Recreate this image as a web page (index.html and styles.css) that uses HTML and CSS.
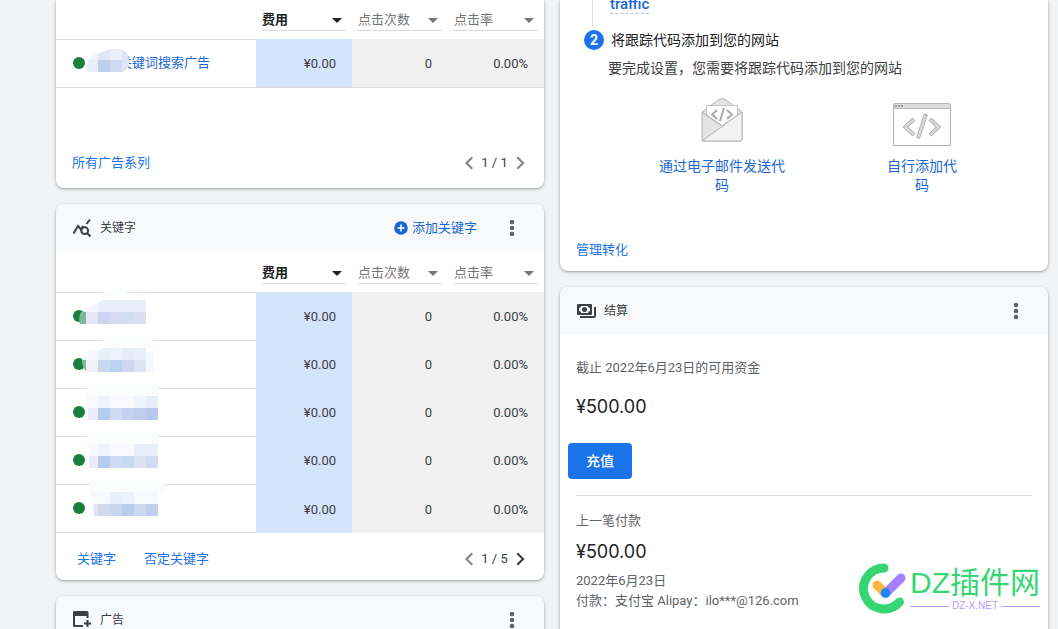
FILE: index.html
```html
<!DOCTYPE html>
<html lang="zh-CN">
<head>
<meta charset="utf-8">
<title>概览</title>
<link rel="stylesheet" href="styles.css">
</head>
<body>
<main class="board">
  <div class="column">
    <section class="card card-cut">
      <table class="stats stats-lined">
        <colgroup><col class="col-name"><col class="col-metric"><col class="col-metric"><col class="col-metric"></colgroup>
        <thead>
          <tr>
            <td></td>
            <th><span class="picker picker-active"><select aria-label="指标一"><option>费用</option></select></span></th>
            <th><span class="picker"><select aria-label="指标二"><option>点击次数</option></select></span></th>
            <th><span class="picker"><select aria-label="指标三"><option>点击率</option></select></span></th>
          </tr>
        </thead>
        <tbody>
          <tr>
            <td class="name"><span class="name-line"><i class="dot"></i><a class="campaign" href="#">关键词搜索广告</a></span>
              <svg class="mask" width="112" height="48" viewBox="0 0 112 48"><clipPath id="blob"><path d="M31 33q-2-13 9-18 14-6 24-5 8 2 9 12 1 7-6 11z"/></clipPath><g clip-path="url(#blob)"><path fill="#f0f3fb" d="M28 6h14v28H28z"/><path fill="#e1e7f6" d="M42 6h12v15H42z"/><path fill="#ebeff9" d="M54 6h20v15H54z"/><path fill="#bfcfee" d="M42 21h12v13H42z"/><path fill="#cfdaf1" d="M54 21h12v13H54z"/><path fill="#dde4f5" d="M66 9h9v25h-9z"/><path fill="#e8edf8" d="M28 21h14v13H28z"/></g></svg></td>
            <td class="cost">¥0.00</td><td class="num">0</td><td class="num">0.00%</td>
          </tr>
        </tbody>
      </table>
      <footer class="card-foot foot-tall">
        <a class="foot-link" href="#">所有广告系列</a>
        <div class="pager">
          <button type="button" aria-label="上一页"><svg width="24" height="24" viewBox="0 0 24 24"><path d="m16 7-1.500-1.500L8 12l6.500 6.500L16 17l-5-5z"/></svg></button>
          <span>1 / 1</span>
          <button type="button" aria-label="下一页"><svg width="24" height="24" viewBox="0 0 24 24"><path d="m8.500 7 1.500-1.500 6.500 6.500-6.500 6.500L8.500 17l5-5z"/></svg></button>
        </div>
      </footer>
    </section>

    <section class="card">
      <header class="card-head">
        <svg class="head-icon" width="20" height="20" viewBox="0 0 20 20" fill="none" stroke="#3c4043" stroke-width="2"><path d="M1.500 15.500 6 8l3 3.500 2-3.500M14.500 6 18 1.500" /><circle cx="12.700" cy="12.700" r="3.400"/><path d="m15 15 3.500 3.500"/></svg>
        <h2>关键字</h2>
        <button type="button" class="add"><svg width="14" height="14" viewBox="0 0 14 14"><circle cx="7" cy="7" r="6.800" fill="#1967d2"/><path d="M7 3.500v7M3.500 7h7" stroke="#fff" stroke-width="1.500"/></svg>添加关键字</button>
        <button type="button" class="more" aria-label="更多"><svg width="24" height="24" viewBox="0 0 24 24"><circle cx="12" cy="6" r="2.300"/><circle cx="12" cy="12" r="2.300"/><circle cx="12" cy="18" r="2.300"/></svg></button>
      </header>
      <table class="stats">
        <colgroup><col class="col-name"><col class="col-metric"><col class="col-metric"><col class="col-metric"></colgroup>
        <thead>
          <tr>
            <td></td>
            <th><span class="picker picker-active"><select aria-label="指标一"><option>费用</option></select></span></th>
            <th><span class="picker"><select aria-label="指标二"><option>点击次数</option></select></span></th>
            <th><span class="picker"><select aria-label="指标三"><option>点击率</option></select></span></th>
          </tr>
        </thead>
        <tbody>
          <tr>
            <td class="name"><span class="name-line"><i class="dot"></i></span>
              <svg class="mask" width="112" height="48" viewBox="0 0 112 48"><path fill="#fbfcfc" d="M47 8V2q2-6 11-6 9 0 13 5 15-2 19 4v5z"/><path fill="#f5f7fd" d="M27 20q6-9 20-9v9z"/><path fill="#e9effa" d="M42 11l5-3h43v12H42z"/><path fill="#7fb896" d="M23 20h7v12h-6q-2-6 1-12z"/><path fill="#e3e7f5" d="M30 20h12v12H30z"/><path fill="#cdd4f0" d="M42 20h12v12H42z"/><path fill="#d4daf1" d="M54 20h12v12H54z"/><path fill="#d2dff3" d="M66 20h12v12H66z"/><path fill="#d8e0f2" d="M78 20h12v12H78z"/></svg></td>
            <td class="cost">¥0.00</td><td class="num">0</td><td class="num">0.00%</td>
          </tr>
          <tr>
            <td class="name"><span class="name-line"><i class="dot"></i></span>
              <svg class="mask" width="112" height="48" viewBox="0 0 112 48"><path fill="#fbfcfc" d="M47-4h50v12H47z"/><path fill="#f5f8fc" d="M26 20q2-10 13-11l8 2v9zM90 12h8v20h-8z"/><path fill="#e8f0fa" d="M47 8h7v12H42v-9z"/><path fill="#eef2fc" d="M54 8h12v12H54z"/><path fill="#e8ecf9" d="M66 8h12v12H66z"/><path fill="#e9f0fb" d="M78 8h12v12H78z"/><path fill="#7fb896" d="M26 20h4v11q-4-4-4-11z"/><path fill="#f0f1f9" d="M30 20h12v12H30z"/><path fill="#c8d8f1" d="M42 20h12v12H42z"/><path fill="#bcd2f1" d="M54 20h12v12H54z"/><path fill="#cfd7f0" d="M66 20h12v12H66z"/><path fill="#dee4f4" d="M78 20h12v12H78z"/></svg></td>
            <td class="cost">¥0.00</td><td class="num">0</td><td class="num">0.00%</td>
          </tr>
          <tr>
            <td class="name"><span class="name-line"><i class="dot"></i></span>
              <svg class="mask" width="112" height="48" viewBox="0 0 112 48"><path fill="#fbfcfc" d="M31-4h72V8H31z"/><path fill="#f8f8fd" d="M31 8h71v12H31z"/><path fill="#eff4fc" d="M42 8h12v12H42zM78 8h12v12H78z"/><path fill="#e7eefa" d="M90 8h12v12H90z"/><path fill="#ecebf7" d="M32 20h10v12H32z"/><path fill="#b4ccef" d="M42 20h12v12H42z"/><path fill="#cfdbf2" d="M54 20h12v12H54z"/><path fill="#c3d3ef" d="M66 20h12v12H66z"/><path fill="#bfccec" d="M78 20h12v12H78z"/><path fill="#b7c8ed" d="M90 20h12v12H90z"/></svg></td>
            <td class="cost">¥0.00</td><td class="num">0</td><td class="num">0.00%</td>
          </tr>
          <tr>
            <td class="name"><span class="name-line"><i class="dot"></i></span>
              <svg class="mask" width="112" height="48" viewBox="0 0 112 48"><path fill="#fbfcfc" d="M31-4h72V8H31z"/><path fill="#f8f8fd" d="M32 8h70v12H33z"/><path fill="#f0f4fc" d="M42 8h12v12H42z"/><path fill="#e8effa" d="M78 8h24v12H78z"/><path fill="#ecebf7" d="M33 20h9v12h-9z"/><path fill="#b5ccef" d="M42 20h12v12H42z"/><path fill="#cfdbf2" d="M54 20h12v12H54z"/><path fill="#c7daf2" d="M66 20h12v12H66z"/><path fill="#dae2f4" d="M78 20h12v12H78z"/><path fill="#cfdcf3" d="M90 20h12v12H90z"/></svg></td>
            <td class="cost">¥0.00</td><td class="num">0</td><td class="num">0.00%</td>
          </tr>
          <tr>
            <td class="name"><span class="name-line"><i class="dot"></i></span>
              <svg class="mask" width="112" height="48" viewBox="0 0 112 48"><path fill="#fbfcfc" d="M33-4h75V8H33z"/><path fill="#f7f9fd" d="M34 8h68v12H37z"/><path fill="#e8f0fb" d="M54 8h12v12H54z"/><path fill="#eef2fb" d="M66 8h12v12H66z"/><path fill="#dfe3f3" d="M37 20h5v12h-4z"/><path fill="#d2d9ef" d="M42 20h12v12H42z"/><path fill="#c9d8f0" d="M54 20h12v12H54z"/><path fill="#bacfef" d="M66 20h12v12H66z"/><path fill="#cad8f1" d="M78 20h12v12H78z"/><path fill="#c0d1f0" d="M90 20h12v12H90z"/></svg></td>
            <td class="cost">¥0.00</td><td class="num">0</td><td class="num">0.00%</td>
          </tr>
        </tbody>
      </table>
      <footer class="card-foot">
        <nav class="foot-nav"><a class="foot-link" href="#">关键字</a><a class="foot-link" href="#">否定关键字</a></nav>
        <div class="pager">
          <button type="button" aria-label="上一页"><svg width="24" height="24" viewBox="0 0 24 24"><path d="m16 7-1.500-1.500L8 12l6.500 6.500L16 17l-5-5z"/></svg></button>
          <span>1 / 5</span>
          <button type="button" class="on" aria-label="下一页"><svg width="24" height="24" viewBox="0 0 24 24"><path d="m8.500 7 1.500-1.500 6.500 6.500-6.500 6.500L8.500 17l5-5z"/></svg></button>
        </div>
      </footer>
    </section>

    <section class="card">
      <header class="card-head">
        <svg class="head-icon" width="20" height="20" viewBox="0 0 20 20"><path fill="#3c4043" d="M2 1h13q1.500 0 1.500 1.500V8h-2V6H3v9h8v2H2.500Q1 17 1 15.500v-13Q1 1 2 1zM14.500 10h2v2.500H19v2h-2.500V17h-2v-2.500H12v-2h2.500z"/></svg>
        <h2>广告</h2>
        <button type="button" class="more" aria-label="更多"><svg width="24" height="24" viewBox="0 0 24 24"><circle cx="12" cy="6" r="2.300"/><circle cx="12" cy="12" r="2.300"/><circle cx="12" cy="18" r="2.300"/></svg></button>
      </header>
    </section>
  </div>

  <div class="column">
    <section class="card card-cut">
      <div class="step-prev"><a href="#">traffic</a></div>
      <div class="step"><span class="badge">2</span><h3>将跟踪代码添加到您的网站</h3></div>
      <p class="step-text">要完成设置<span class="punct">，</span>您需要将跟踪代码添加到您的网站</p>
      <div class="choices">
        <button type="button" class="choice">
          <svg width="44" height="48" viewBox="0 0 44 48" fill="#e3e3e3" stroke="#b3b3b3" stroke-linejoin="round"><path d="M2 14 18 2q4-3 8 0l16 12v27q0 2-2 2H3q-1 0-1-2z"/><path fill="#fff" stroke="#c2c2c2" d="M6.500 7.500h31V18L22 28 6.500 18z"/><path fill="#f2f2f2" d="m2 43 40-29v27q0 2-2 2z"/><path fill="#fff" stroke="#c2c2c2" d="M6.500 17V7.500h31V17L22 27.500z"/><path fill="none" d="m2 14 20 14"/><path fill="none" stroke="#aaa" stroke-width="2" stroke-linejoin="miter" d="m17 12-5 4.500 5 4.500M27 12l5 4.500-5 4.500M24 10l-4 13"/></svg>
          <span>通过电子邮件发送代<br>码</span>
        </button>
        <button type="button" class="choice">
          <svg width="58" height="48" viewBox="0 0 58 48" fill="none" stroke="#b3b3b3"><path fill="#fff" d="M.500 47.500v-40q0-2 2-2h53q2 0 2 2v40z"/><path fill="#dcdcdc" d="M.500 10.500v-3q0-2 2-2h53q2 0 2 2v3z"/><path stroke="#999" stroke-width="2" stroke-dasharray="2 1" d="M2 8h9"/><g stroke="#aaa" stroke-width="4"><path d="m21 21-8.500 8L21 37M37 21l8.500 8L37 37M33 16l-8 24"/></g><g stroke="#d8d8d8" stroke-width="2.500"><path d="m20.500 21.500-8 7.500 8 7.500M37.500 21.500l8 7.500-8 7.500M32.700 17l-7.400 22"/></g></svg>
          <span>自行添加代<br>码</span>
        </button>
      </div>
      <a class="foot-link manage" href="#">管理转化</a>
    </section>

    <section class="card">
      <header class="card-head">
        <svg class="head-icon" width="20" height="20" viewBox="0 0 20 20"><path fill="#3c4043" fill-rule="evenodd" d="M2 3h13q1 0 1 1v9q0 1-1 1H2q-1 0-1-1V4q0-1 1-1zM5 5q0 2-2 2v3q2 0 2 2h7q0-2 2-2V7q-2 0-2-2zM18 6h2v9q0 2-2 2H4v-2h14z"/><circle cx="8.500" cy="8.500" r="2.500" fill="#3c4043"/></svg>
        <h2>结算</h2>
        <button type="button" class="more" aria-label="更多"><svg width="24" height="24" viewBox="0 0 24 24"><circle cx="12" cy="6" r="2.300"/><circle cx="12" cy="12" r="2.300"/><circle cx="12" cy="18" r="2.300"/></svg></button>
      </header>
      <div class="billing">
        <p>截止 2022年6月23日的可用资金</p>
        <p class="amount funds">¥500.00</p>
        <button type="button" class="topup">充值</button>
        <div class="last">
          <p>上一笔付款</p>
          <p class="amount">¥500.00</p>
          <p>2022年6月23日</p>
          <p>付款<span class="punct">：</span>支付宝 Alipay<span class="punct">：</span>ilo***@126.com</p>
        </div>
      </div>
    </section>
  </div>

  <div class="watermark">
    <svg width="50" height="52" viewBox="0 0 50 52" fill="none" stroke-linecap="round"><path stroke="#35d673" stroke-width="9" d="M26 5A20.500 20.500 0 1 0 41.500 39"/><path stroke="#ffb63d" stroke-width="9" d="m19 22 8 8"/><path stroke="#a57fff" stroke-width="9" d="M43 15 28 30"/><circle cx="27.500" cy="30" r="4.800" fill="#1b86ff"/></svg>
    <div class="wm-text"><strong>DZ插件网</strong><small>DZ-X.NET</small></div>
  </div>
</main>
</body>
</html>
```

FILE: styles.css
```css
* { box-sizing: border-box; }
body {
  margin: 0;
  background: #f1f3f4;
  color: #3c4043;
  font: 13px/20px Roboto, "Noto Sans CJK SC", sans-serif;
}
h2, h3, p { margin: 0; font-weight: 400; }
a { color: #1967d2; text-decoration: none; }
button { border: 0; padding: 0; background: none; font: inherit; cursor: pointer; }
svg { display: block; flex: none; }
.punct { font-family: "Noto Sans CJK TC", sans-serif; line-height: 1; }

.board {
  position: relative;
  display: grid;
  grid-template-columns: 1fr 1fr;
  gap: 16px;
  height: 100vh;
  padding: 0 10px 0 56px;
  overflow: hidden;
}
.column { display: flex; flex-direction: column; gap: 16px; min-width: 0; }
.card {
  flex: none;
  background: #fff;
  border-radius: 8px;
  box-shadow: 0 1px 2px rgba(60, 64, 67, .3), 0 1px 3px 1px rgba(60, 64, 67, .15);
}
.card-cut { border-radius: 0 0 8px 8px; }

.card-head {
  display: flex;
  align-items: center;
  height: 48px;
  padding: 0 20px 0 16px;
  background: #f8f9fb;
  border-radius: 8px 8px 0 0;
}
.card-head h2 { margin: 0 auto 0 8px; font-size: 12px; }
.add { display: flex; align-items: center; gap: 4px; color: #1967d2; }
.more { margin-left: 23px; fill: #5f6368; }

.stats { width: 100%; table-layout: fixed; border-spacing: 0; }
.col-metric { width: 96px; }
.stats td, .stats th { padding: 0; }
.stats thead td { height: 40px; }
.stats-lined thead td { height: 39px; }
.stats th { padding: 0 6px 8px; vertical-align: bottom; font-weight: 400; }
.picker { position: relative; display: block; border-bottom: 1px solid #dadce0; color: #757575; }
.picker-active { color: #202124; font-weight: 700; }
.picker::after {
  content: "";
  position: absolute;
  right: 4px;
  top: 8px;
  border: 5px solid transparent;
  border-top-color: currentColor;
  border-bottom: 0;
  pointer-events: none;
}
.picker select {
  display: block;
  width: 100%;
  height: 20px;
  padding: 0;
  border: 0;
  appearance: none;
  background: none;
  color: inherit;
  font: inherit;
  font-size: 13px;
}
.stats tbody td { height: 48px; text-align: right; }
.stats .name { position: relative; padding-bottom: 2px; border-top: 1px solid #dadce0; text-align: left; }
.stats tbody tr:last-child td { height: 49px; }
.stats tbody tr:last-child .name { border-bottom: 1px solid #dadce0; }
.stats-lined tbody tr:last-child td { border-bottom: 1px solid #dadce0; }
.stats .cost { padding: 2px 16px 0 0; background: #d4e4fa; }
.stats .num { padding: 2px 16px 0 0; background: #f1f1f1; }
.name-line { display: flex; align-items: center; padding-left: 17px; }
.dot { width: 12px; height: 12px; border-radius: 50%; background: #188038; }
.campaign { margin-left: 34px; }
.mask { position: absolute; left: 0; top: -1px; overflow: visible; }

.card-foot {
  display: flex;
  align-items: center;
  justify-content: space-between;
  height: 47px;
  padding: 4px 12px 0 16px;
}
.foot-tall { height: 100px; padding-top: 49px; }
.foot-nav { display: flex; gap: 28px; padding-left: 5px; }
.foot-link { color: #1a73e8; }
.pager { display: flex; align-items: center; }
.pager span { min-width: 27px; text-align: center; }
.pager button { fill: #80868b; }
.pager .on { fill: #3c4043; }

.step-prev {
  height: 26px;
  margin-left: 32px;
  padding-left: 17px;
  border-left: 1px solid #dadce0;
  font-size: 15px;
  font-weight: 500;
  line-height: 9px;
}
.step-prev a { display: block; width: max-content; height: 14px; border-bottom: 1px dashed #bdc1c6; }
.step { display: flex; align-items: center; gap: 7px; padding: 4px 24px 0; font-size: 14px; color: #202124; }
.step h3 { font-size: 14px; }
.badge {
  width: 20px;
  height: 20px;
  border-radius: 50%;
  background: #1a73e8;
  color: #fff;
  font-weight: 700;
  text-align: center;
}
.step-text { padding: 8px 16px 0 48px; font-size: 14px; }
.choices { display: grid; grid-template-columns: 1fr 1fr; padding: 20px 26px 0 62px; }
.choice {
  display: flex;
  flex-direction: column;
  align-items: center;
  gap: 11px;
  color: #1967d2;
  font-size: 14px;
  line-height: 19px;
}
.manage { display: block; padding: 45px 16px 11px; }

.billing { padding: 23px 16px 48px; color: #5f6368; }
.amount { margin: 9px 0 7px; color: #202124; font: 18px/24px Inter, sans-serif; }
.funds { margin: 17px 0 24px; }
.topup {
  display: block;
  min-width: 64px;
  height: 36px;
  margin-left: -8px;
  padding: 0 16px;
  border-radius: 4px;
  background: #1a73e8;
  color: #fff;
  font-size: 14px;
  font-weight: 500;
}
.last { margin-top: 16px; padding-top: 15px; border-top: 1px solid #dadce0; }

.watermark { position: absolute; right: 18px; bottom: 14px; display: flex; align-items: center; gap: 2px; }
.wm-text { display: flex; flex-direction: column; }
.wm-text strong { color: #35d673; font: 400 30px/34px "Liberation Sans", "Noto Sans CJK SC", sans-serif; }
.wm-text small {
  display: flex;
  align-items: center;
  gap: 3px;
  color: #b79cff;
  font: 10px/12px "Liberation Sans", sans-serif;
}
.wm-text small::before, .wm-text small::after { content: ""; flex: 1; height: 1px; background: #b79cff; }
```
